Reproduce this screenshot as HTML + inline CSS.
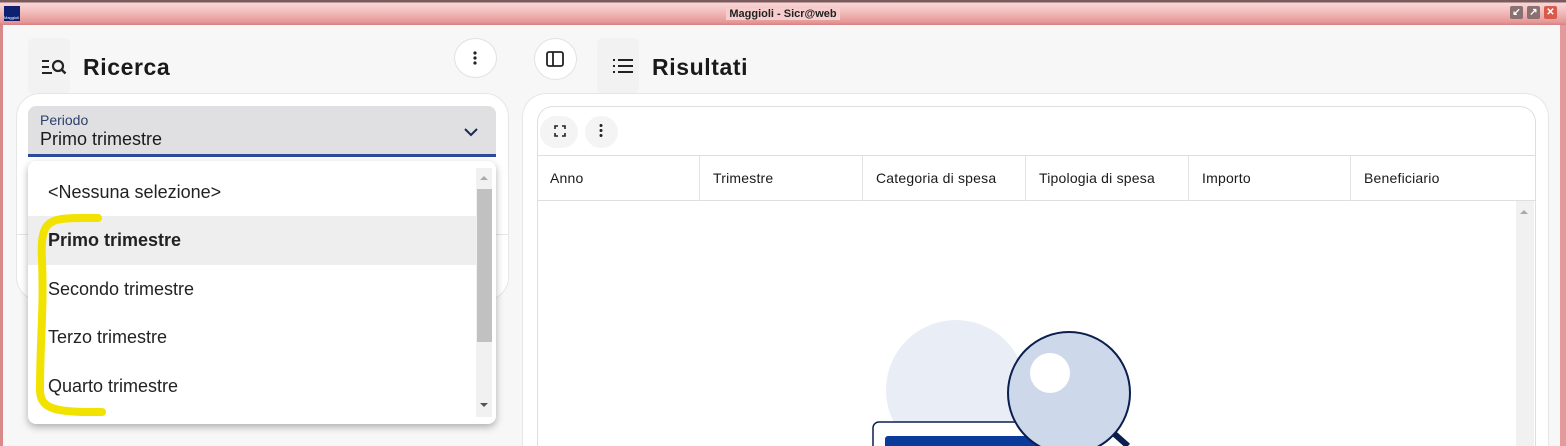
<!DOCTYPE html>
<html><head><meta charset="utf-8"><style>
*{box-sizing:border-box;margin:0;padding:0}
html,body{width:1566px;height:446px;overflow:hidden}
body{background:#f7f7f7;font-family:"Liberation Sans",sans-serif;position:relative;color:#1c1c1c}
.abs{position:absolute}
.tb{left:0;top:0;width:1566px;height:25px;background:linear-gradient(#7a5a5c 0,#7a5a5c 2px,#f8d6d6 3px,#f2bcbc 12px,#e59898 22px,#d88080 25px)}
.frame{left:0;top:25px;width:3px;height:421px;background:#d88a8a}
.frameR{left:1560px;top:25px;width:6px;height:421px;background:#e39a9a}
.wb{top:6px;width:13px;height:13px;border-radius:2px;color:#fff;font-size:10px;font-weight:bold;text-align:center;line-height:13px}
.circ{border-radius:50%;background:#fff;border:1px solid #e2e2e2}
.hd{font-size:23px;font-weight:bold;letter-spacing:.6px;color:#1a1a1a}
.th{top:156px;height:45px;border-right:1px solid #e3e3e3;font-size:14px;padding:14px 0 0 13px;color:#1a1a1a;letter-spacing:.2px}
.it{left:28px;width:448px;height:48px;font-size:18px;padding:14px 0 0 20px;color:#222}
</style></head><body>
<div class="abs tb"></div>
<div class="abs" style="left:4px;top:6px;width:16px;height:15px;background:#102070;color:#fff;font-size:4px;padding-top:9px">Maggioli</div>
<div class="abs" style="left:0;width:1566px;top:8px;text-align:center;font-size:11px;font-weight:bold;color:#222"><span style="background:#f6cccc;padding:0 3px">Maggioli - Sicr@web</span></div>
<div class="abs wb" style="left:1510px;background:#8a7070">↙</div>
<div class="abs wb" style="left:1527px;background:#8a7070">↗</div>
<div class="abs wb" style="left:1544px;background:#d85a4a">✕</div>
<div class="abs frame"></div><div class="abs frameR"></div>

<div class="abs" style="left:28px;top:38px;width:42px;height:56px;background:#f2f2f2;border-radius:6px"></div>
<svg class="abs" style="left:41px;top:58px" width="26" height="18" viewBox="0 0 26 18"><path d="M1 3h7M1 9h7M1 15h10" stroke="#222" stroke-width="2"/><circle cx="17" cy="8" r="5" fill="none" stroke="#222" stroke-width="2.2"/><path d="M20.5 11.5l4 4" stroke="#222" stroke-width="2.4"/></svg>
<div class="abs hd" style="left:83px;top:54px">Ricerca</div>
<div class="abs circ" style="left:454px;top:38px;width:43px;height:40px"></div>
<svg class="abs" style="left:472px;top:50px" width="6" height="16"><circle cx="3" cy="3" r="1.6" fill="#222"/><circle cx="3" cy="8" r="1.6" fill="#222"/><circle cx="3" cy="13" r="1.6" fill="#222"/></svg>
<div class="abs" style="left:16px;top:93px;width:493px;height:208px;background:#fff;border:1px solid #e6e6e6;border-radius:24px"></div>
<div class="abs" style="left:16px;top:234px;width:493px;height:1px;background:#e6e6e6"></div>
<div class="abs" style="left:28px;top:106px;width:468px;height:51px;background:#e0e0e3;border-radius:8px 8px 0 0;border-bottom:3px solid #2c4a9c"></div>
<div class="abs" style="left:40px;top:112px;font-size:14px;color:#2b3f6a">Periodo</div>
<div class="abs" style="left:40px;top:129px;font-size:18px;color:#1a1a1a">Primo trimestre</div>
<svg class="abs" style="left:463px;top:127px" width="16" height="10"><path d="M2 2l6 6 6-6" fill="none" stroke="#1a2a50" stroke-width="2"/></svg>

<div class="abs" style="left:28px;top:161px;width:468px;height:263px;background:#fff;border-radius:8px;box-shadow:0 3px 8px rgba(0,0,0,.3)"></div>
<div class="abs it" style="top:168px">&lt;Nessuna selezione&gt;</div>
<div class="abs it" style="top:216px;background:#eee;font-weight:bold;height:49px">Primo trimestre</div>
<div class="abs it" style="top:265px">Secondo trimestre</div>
<div class="abs it" style="top:313px">Terzo trimestre</div>
<div class="abs it" style="top:362px">Quarto trimestre</div>
<div class="abs" style="left:476px;top:168px;width:16px;height:249px;background:#f1f1f1"></div>
<div class="abs" style="left:477px;top:189px;width:15px;height:153px;background:#c1c1c1"></div>
<svg class="abs" style="left:479px;top:174px" width="10" height="236"><path d="M1 6l4-4 4 4z" fill="#aaa"/><path d="M1 229l4 4 4-4z" fill="#555"/></svg>
<svg class="abs" style="left:34px;top:210px" width="75" height="215"><path d="M64 8H50C14 8 6 10 8 50c2 50-2 80-2 130 0 18 14 22 50 22h12" fill="none" stroke="#f2e200" stroke-width="8" stroke-linecap="round"/></svg>

<div class="abs circ" style="left:534px;top:38px;width:43px;height:42px"></div>
<svg class="abs" style="left:546px;top:51px" width="18" height="16"><rect x="1" y="1" width="16" height="14" rx="2" fill="none" stroke="#222" stroke-width="1.8"/><path d="M7 1v14" stroke="#222" stroke-width="1.8"/></svg>
<div class="abs" style="left:597px;top:38px;width:42px;height:56px;background:#f2f2f2;border-radius:6px"></div>
<svg class="abs" style="left:612px;top:58px" width="22" height="16"><path d="M1 2h2M1 8h2M1 14h2M6 2h15M6 8h15M6 14h15" stroke="#222" stroke-width="2"/></svg>
<div class="abs hd" style="left:652px;top:54px">Risultati</div>
<div class="abs" style="left:522px;top:93px;width:1027px;height:353px;background:#fff;border:1px solid #e6e6e6;border-bottom:none;border-radius:24px 24px 0 0"></div>
<div class="abs" style="left:537px;top:106px;width:999px;height:340px;background:#fff;border:1px solid #dedede;border-bottom:none;border-radius:16px 16px 0 0"></div>
<div class="abs" style="left:540px;top:116px;width:38px;height:32px;background:#f4f4f4;border-radius:16px"></div>
<div class="abs" style="left:585px;top:116px;width:33px;height:32px;background:#f4f4f4;border-radius:16px"></div>
<svg class="abs" style="left:554px;top:125px" width="12" height="12"><path d="M1 4V1h3M8 1h3v3M11 8v3H8M4 11H1V8" fill="none" stroke="#222" stroke-width="1.6"/></svg>
<svg class="abs" style="left:598px;top:123px" width="6" height="16"><circle cx="3" cy="2.5" r="1.5" fill="#222"/><circle cx="3" cy="7.5" r="1.5" fill="#222"/><circle cx="3" cy="12.5" r="1.5" fill="#222"/></svg>
<div class="abs" style="left:537px;top:155px;width:998px;height:1px;background:#dedede"></div>
<div class="abs" style="left:537px;top:200px;width:998px;height:1px;background:#dedede"></div>
<div class="abs th" style="left:537px;width:163px">Anno</div>
<div class="abs th" style="left:700px;width:163px">Trimestre</div>
<div class="abs th" style="left:863px;width:163px">Categoria di spesa</div>
<div class="abs th" style="left:1026px;width:163px">Tipologia di spesa</div>
<div class="abs th" style="left:1189px;width:162px">Importo</div>
<div class="abs th" style="left:1351px;width:184px;border:none">Beneficiario</div>
<div class="abs" style="left:1516px;top:201px;width:18px;height:245px;background:#f1f1f1"></div>
<svg class="abs" style="left:1519px;top:208px" width="10" height="8"><path d="M1 6l4-4 4 4z" fill="#aaa"/></svg>
<svg class="abs" style="left:860px;top:310px" width="290" height="136">
<circle cx="96" cy="80" r="70" fill="#e8edf6"/>
<rect x="13" y="112" width="170" height="40" rx="6" fill="#fff" stroke="#0b1f4f" stroke-width="1.5"/>
<rect x="25" y="126" width="160" height="20" rx="3" fill="#0a3a9a"/>
<path d="M250 120l18 16" stroke="#0b1f4f" stroke-width="6"/>
<circle cx="209" cy="83" r="61" fill="#cdd8ea" stroke="#0b1f4f" stroke-width="2"/>
<circle cx="190" cy="63" r="20" fill="#fff"/>
</svg>
</body></html>
